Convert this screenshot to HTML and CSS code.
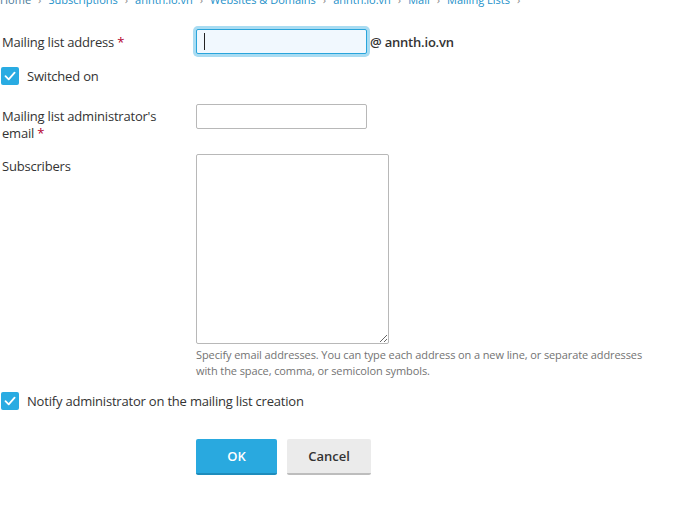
FILE: index.html
```html
<!DOCTYPE html>
<html lang="en">
<head>
<meta charset="utf-8">
<title>Add Mailing List</title>
<link rel="stylesheet" href="styles.css">
</head>
<body>
<nav class="breadcrumbs">
  <a class="crumb home" href="#">Home</a><span class="sep">›</span>
  <a class="crumb" href="#">Subscriptions</a><span class="sep">›</span>
  <a class="crumb" href="#">annth.io.vn</a><span class="sep">›</span>
  <a class="crumb" href="#">Websites &amp; Domains</a><span class="sep">›</span>
  <a class="crumb" href="#">annth.io.vn</a><span class="sep">›</span>
  <a class="crumb" href="#">Mail</a><span class="sep">›</span>
  <a class="crumb" href="#">Mailing Lists</a><span class="sep">›</span>
</nav>

<form class="form">
  <div class="row row-address">
    <label class="label">Mailing list address <span class="req">*</span></label>
    <div class="field field-inline">
      <span class="input-wrap">
        <input class="input focused" type="text" value="">
        <span class="caret"></span>
      </span>
      <span class="domain">@ annth.io.vn</span>
    </div>
  </div>

  <label class="check-row row-switch">
    <span class="checkbox"><svg viewBox="0 0 18 18" width="18" height="18"><path d="M4.5 9.2 L7.7 12.3 L13.6 5.6" fill="none" stroke="#fff" stroke-width="1.8" stroke-linecap="round" stroke-linejoin="round"/></svg></span>
    <span class="check-text">Switched on</span>
  </label>

  <div class="row row-admin">
    <label class="label">Mailing list administrator's email <span class="req">*</span></label>
    <div class="field">
      <input class="input" type="text">
    </div>
  </div>

  <div class="row row-subs">
    <label class="label">Subscribers</label>
    <div class="field">
      <textarea class="textarea"></textarea>
      <p class="hint">Specify email addresses. You can type each address on a new line, or separate addresses with the space, comma, or semicolon symbols.</p>
    </div>
  </div>

  <label class="check-row row-notify">
    <span class="checkbox"><svg viewBox="0 0 18 18" width="18" height="18"><path d="M4.5 9.2 L7.7 12.3 L13.6 5.6" fill="none" stroke="#fff" stroke-width="1.8" stroke-linecap="round" stroke-linejoin="round"/></svg></span>
    <span class="check-text">Notify administrator on the mailing list creation</span>
  </label>

  <div class="buttons">
    <button type="button" class="btn btn-primary">OK</button>
    <button type="button" class="btn btn-default">Cancel</button>
  </div>
</form>
</body>
</html>
```
FILE: styles.css
```css
html, body {
  margin: 0;
  padding: 0;
  background: #fff;
}
body {
  font-family: "Open Sans", "Liberation Sans", sans-serif;
  font-size: 13px;
  letter-spacing: -0.2px;
  color: #222;
  line-height: 18px;
}
.breadcrumbs {
  display: flex;
  align-items: center;
  margin-top: -9px;
  height: 18px;
  font-size: 11px;
  letter-spacing: 0;
  white-space: nowrap;
}
.crumb {
  color: #1a8fc8;
  text-decoration: none;
}
.crumb.home {
  color: #4a7a9a;
}
.sep {
  color: #8a8a8a;
  padding: 0 7px;
}
.form {
  display: flex;
  flex-direction: column;
  padding-left: 2px;
}
.row {
  display: grid;
  grid-template-columns: 194px 1fr;
  align-items: start;
}
.label {
  color: #333;
  padding-top: 4px;
  padding-right: 20px;
}
.req {
  color: #b3002d;
}
.row-address {
  margin-top: 20px;
}
.field-inline {
  display: flex;
  align-items: center;
  gap: 3px;
}
.input-wrap {
  position: relative;
  display: block;
}
.caret {
  position: absolute;
  left: 8px;
  top: 4px;
  width: 1px;
  height: 17px;
  background: #222;
}
.input {
  box-sizing: border-box;
  display: block;
  width: 171px;
  height: 25px;
  border: 1px solid #b8b8b8;
  border-radius: 2px;
  padding: 0 6px;
  font: inherit;
  background: #fff;
  margin: 0;
  outline: none;
}
.input.focused {
  border-color: #29a5dc;
  background: #f1f8fe;
  box-shadow: 0 0 0 3px #a9dcf2;
}
.domain {
  font-weight: 600;
  color: #333;
}
.check-row {
  display: flex;
  align-items: center;
  gap: 8px;
  margin-left: -1px;
}
.row-switch {
  margin-top: 13px;
}
.checkbox {
  width: 18px;
  height: 18px;
  border-radius: 2px;
  background: #29abe2;
  display: flex;
}
.check-text {
  color: #333;
}
.row-admin {
  margin-top: 19px;
}
.row-admin .label {
  padding-top: 4px;
  line-height: 17px;
}
.row-subs {
  margin-top: 12px;
}
.row-subs .label {
  padding-top: 3px;
}
.textarea {
  box-sizing: border-box;
  display: block;
  width: 193px;
  height: 190px;
  border: 1px solid #b8b8b8;
  border-radius: 2px;
  margin: 0;
  font: inherit;
  resize: both;
}
.hint {
  margin: 3px 0 0;
  font-size: 11px;
  letter-spacing: -0.1px;
  line-height: 16px;
  color: #737373;
  width: 460px;
}
.row-notify {
  margin-top: 13px;
}
.buttons {
  display: flex;
  gap: 10px;
  margin-top: 29px;
  margin-left: 194px;
}
.btn {
  box-sizing: border-box;
  height: 36px;
  border: 0;
  border-radius: 2px;
  font: inherit;
  font-weight: 600;
  cursor: pointer;
  padding: 0;
}
.btn-primary {
  width: 81px;
  background: #29a9df;
  color: #fff;
  border-bottom: 2px solid #1e8cbc;
}
.btn-default {
  width: 84px;
  background: #ebebeb;
  color: #333;
  border-bottom: 2px solid #bdbdbd;
}
```
